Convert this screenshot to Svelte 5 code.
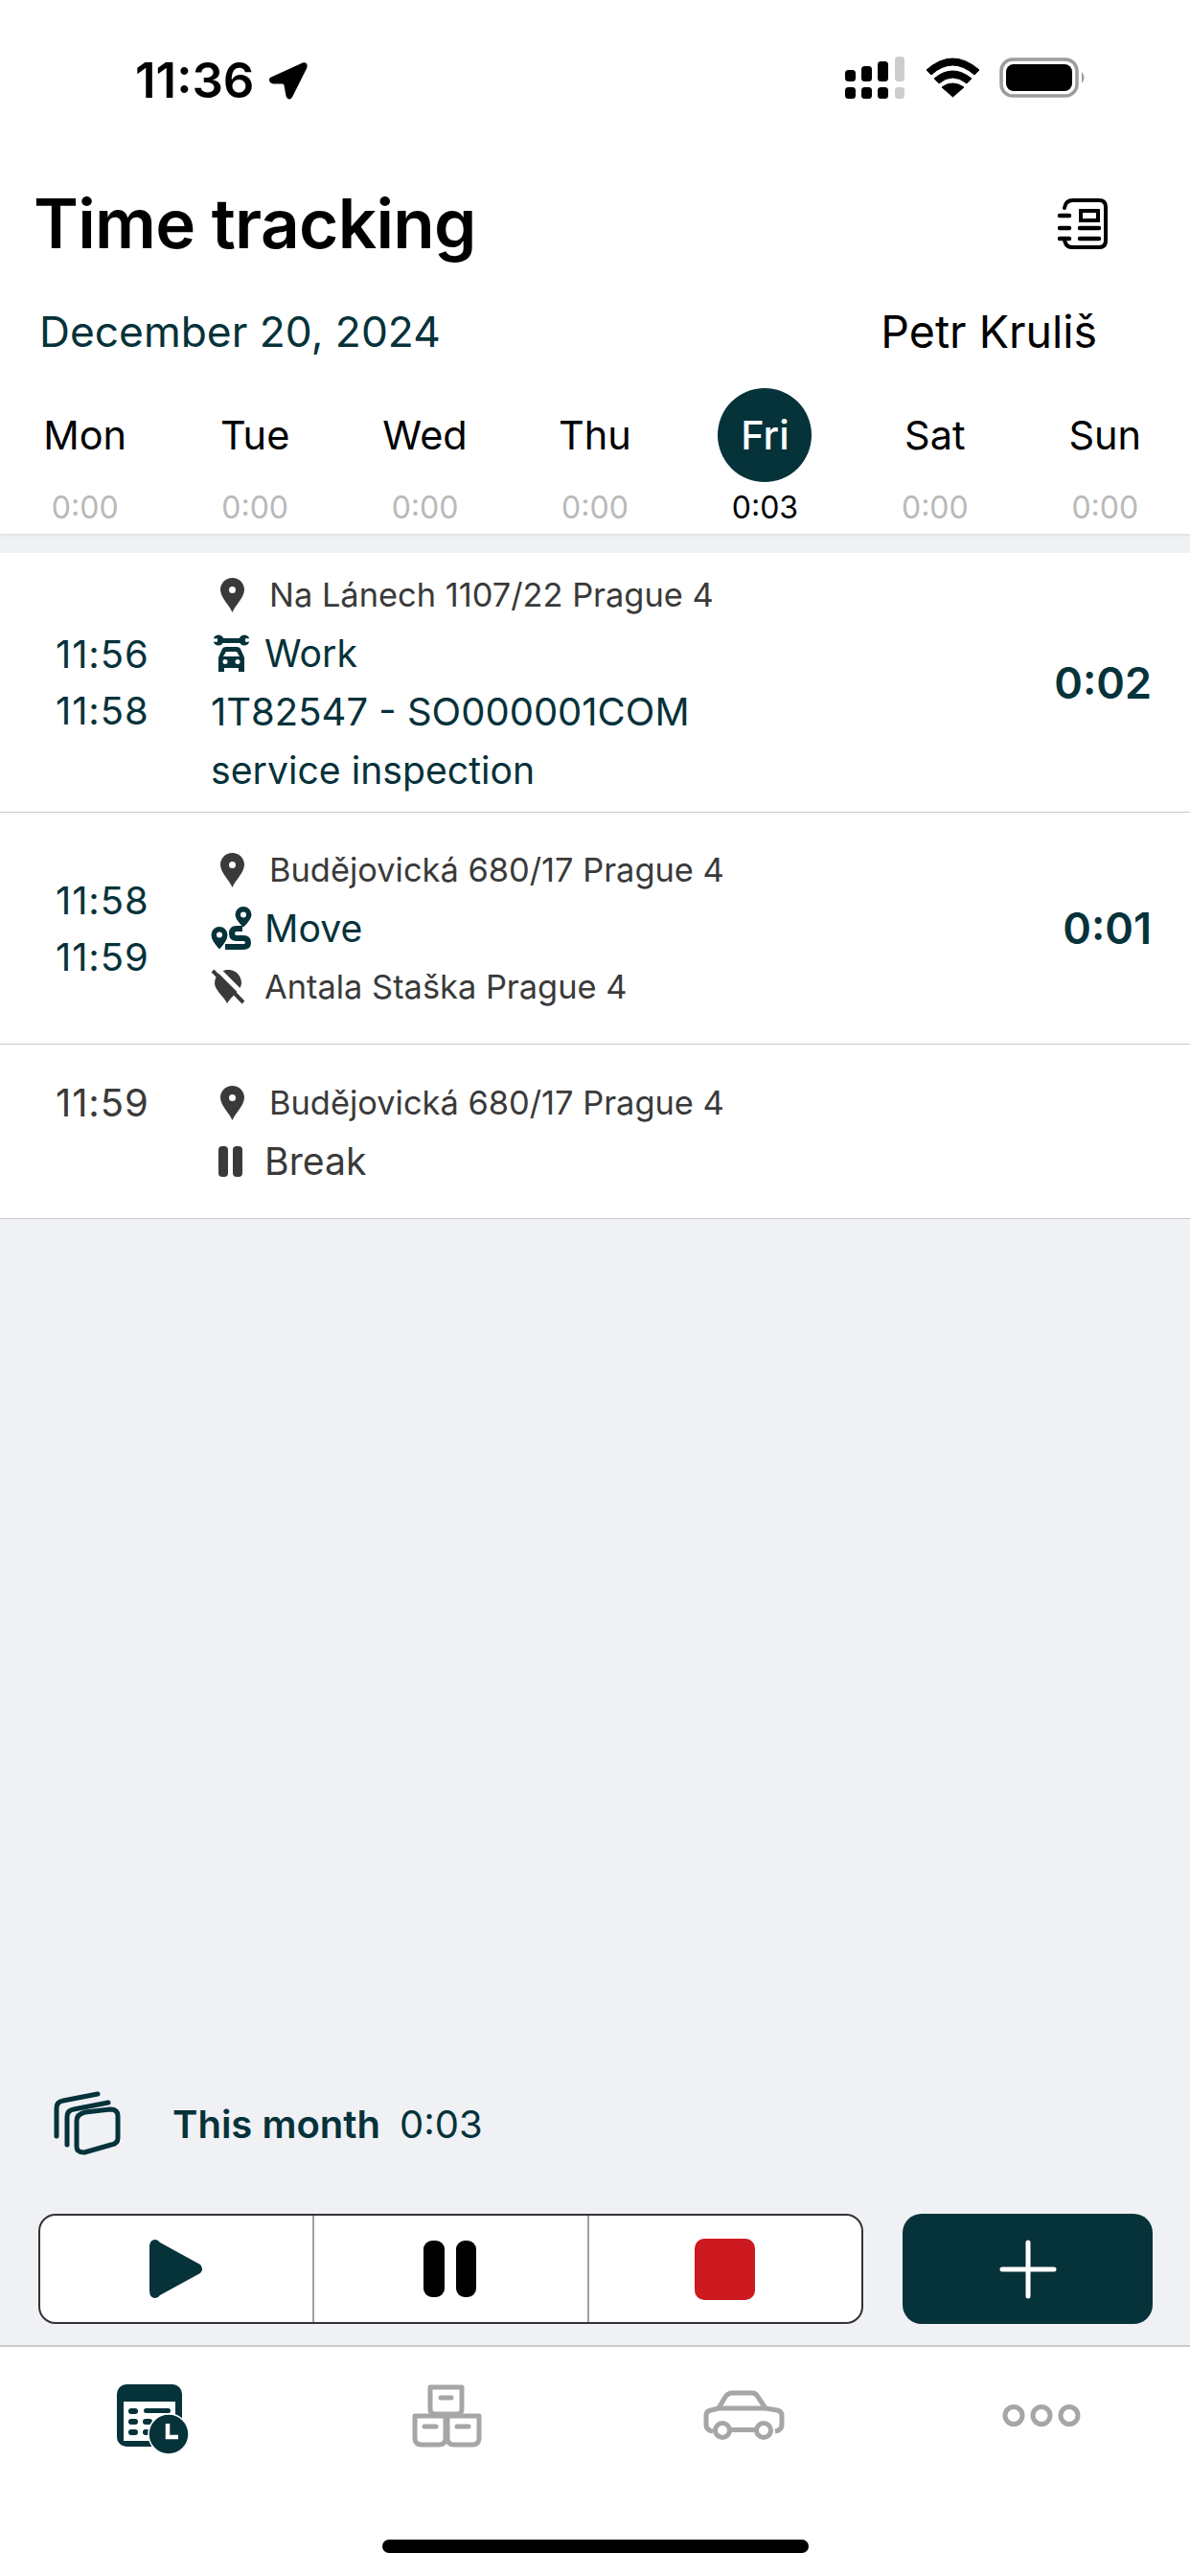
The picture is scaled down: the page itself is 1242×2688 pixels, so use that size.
<script>
  const days = [
    { d: 'Mon', h: '0:00' }, { d: 'Tue', h: '0:00' }, { d: 'Wed', h: '0:00' }, { d: 'Thu', h: '0:00' },
    { d: 'Fri', h: '0:03', on: true }, { d: 'Sat', h: '0:00' }, { d: 'Sun', h: '0:00' }
  ];
  const pin = 'M12.5 0C5.6 0 0 5.5 0 12.3c0 8.2 9.6 16.4 12.5 23.7C15.4 28.7 25 20.500 25 12.300 25 5.500 19.400 0 12.500 0Zm0 9a3.500 3.500 0 1 1 0 7 3.500 3.500 0 0 1 0-7Z';
</script>

<div class="app">
  <header class="head">
    <div class="status">
      <span class="clock">11:36</span>
      <svg class="loc" viewBox="278 60 44 46" width="44" height="46"><path d="M283 82 L316 67 Q320 66 319 70 L304 100 Q302 104 300 100 L298 89 Q297.500 86 295 86 L285 86 Q281 84 283 82Z" fill="#000" stroke="#000" stroke-width="3" stroke-linejoin="round"/></svg>
      <span class="grow"></span>
      <svg viewBox="880 60 255 46" width="255" height="46">
        <g fill="#000">
          <rect x="882" y="75" width="11" height="12" rx="3.500"/><rect x="882" y="93" width="11" height="12" rx="3.500"/>
          <rect x="899" y="71" width="11" height="16" rx="3.500"/><rect x="899" y="93" width="11" height="12" rx="3.500"/>
          <rect x="916" y="66" width="11" height="21" rx="3.500"/><rect x="916" y="93" width="11" height="12" rx="3.500"/>
        </g>
        <g fill="#cdcdcd"><rect x="934" y="61" width="10" height="26" rx="3.500"/><rect x="934" y="93" width="10" height="12" rx="3.500"/></g>
        <path d="M967 75 Q994 51 1022 75 L1017 80 Q994 60 972 80Z M975 84 Q994 68 1014 84 L1009 89 Q994 77 980 89Z M983 93 Q994 85 1006 93 L994.500 103Z" fill="#000" stroke="#000" stroke-width="1" stroke-linejoin="round"/>
        <rect x="1045" y="64" width="79" height="38" rx="12" fill="none" stroke="#9c9c9c" stroke-width="3.500"/>
        <rect x="1050" y="69" width="69" height="28" rx="8" fill="#000"/>
        <path d="M1129 77 Q1134 83 1129 89Z" fill="#9c9c9c"/>
      </svg>
    </div>
    <div class="title-row">
      <h1>Time tracking</h1>
      <svg class="book" viewBox="1100 202 58 64" width="58" height="64" fill="none" stroke="#000" stroke-width="4" stroke-linecap="round">
        <path d="M1111 217 Q1112 209 1120 209 H1147 Q1154 209 1154 216 V251 Q1154 258 1147 258 H1119 Q1112 258 1111 250"/>
        <path d="M1106 225 H1116 M1106 238 H1116 M1106 249 H1116" stroke-width="4.500"/>
        <rect x="1128" y="220" width="18" height="10"/>
        <path d="M1127 238 H1147 M1127 249 H1147" stroke-width="4.500"/>
      </svg>
    </div>
    <div class="date-row">
      <span class="date">December 20, 2024</span>
      <span class="user">Petr Kruliš</span>
    </div>
    <div class="week">
      {#each days as day}
        <div class="day" class:on={day.on}>
          <span class="dname">{day.d}</span>
          <span class="dhours">{day.h}</span>
        </div>
      {/each}
    </div>
  </header>

  <main class="list">
    <section class="row r1">
      <div class="times"><span>11:56</span><span>11:58</span></div>
      <div class="detail">
        <div class="line addr"><svg class="pin" viewBox="0 0 25 36" width="25" height="36"><path d={pin} fill-rule="evenodd" fill="#3a3a3a"/></svg>Na Lánech 1107/22 Prague 4</div>
        <div class="line dark">
          <svg class="kind" viewBox="218 660 44 44" width="44" height="44" fill="#06323a">
            <path d="M227 668.500 H252" stroke="#06323a" stroke-width="5"/>
            <circle cx="226" cy="668" r="5.500"/><circle cx="253" cy="668" r="5.500"/>
            <path d="M219 668 H225 M260 668 H254" stroke="#fff" stroke-width="3.500"/>
            <path d="M226 701 V686 L230 677 Q231 675 234 675 H245 Q248 675 249 677 L253 686 V701 H247 V697 H232 V701Z M231 685 H248 L245 680 H234Z" fill-rule="evenodd"/>
            <circle cx="233" cy="690.500" r="2.500" fill="#fff"/><circle cx="246" cy="690.500" r="2.500" fill="#fff"/>
          </svg>Work</div>
        <div class="line dark code">1T82547 - SO000001COM</div>
        <div class="line dark">service inspection</div>
      </div>
      <div class="dur">0:02</div>
    </section>

    <section class="row r2">
      <div class="times"><span>11:58</span><span>11:59</span></div>
      <div class="detail">
        <div class="line addr"><svg class="pin" viewBox="0 0 25 36" width="25" height="36"><path d={pin} fill-rule="evenodd" fill="#3a3a3a"/></svg>Budějovická 680/17 Prague 4</div>
        <div class="line dark">
          <svg class="kind" viewBox="218 945 44 50" width="44" height="50">
            <path d="M252 947 a8.500 8.500 0 0 0-8.500 8.500 q0 5 8.500 13 q8.500-8 8.500-13 a8.500 8.500 0 0 0-8.500-8.500Zm0 5.500a3 3 0 1 1 0 6 3 3 0 0 1 0-6Z" fill="#06323a" fill-rule="evenodd"/>
            <path d="M227 968 a8.500 8.500 0 0 0-8.500 8.500 q0 6 8.500 15 q8.500-9 8.500-15 a8.500 8.500 0 0 0-8.500-8.500Zm0 5.500a3 3 0 1 1 0 6 3 3 0 0 1 0-6Z" fill="#06323a" fill-rule="evenodd"/>
            <path d="M251 970 H245 Q240 970 240 975 Q240 980 245 980 H252 Q257 980 257 984.500 Q257 989 252 989 H233" fill="none" stroke="#06323a" stroke-width="6"/>
          </svg>Move</div>
        <div class="line sub">
          <svg class="kind" viewBox="218 1010 44 40" width="44" height="40">
            <path d="M236 1012 C245 1012 250 1019 250 1026 C250 1033 240 1039 235 1047 C231 1039 222 1033 222 1026 C222 1019 228 1012 236 1012Z" fill="#3a3a3a"/>
            <path d="M223 1009 L255 1041" stroke="#fff" stroke-width="5"/>
            <path d="M220 1013 L252 1046" stroke="#3a3a3a" stroke-width="4"/>
          </svg>Antala Staška Prague 4</div>
      </div>
      <div class="dur">0:01</div>
    </section>

    <section class="row r3">
      <div class="times grey top"><span>11:59</span></div>
      <div class="detail">
        <div class="line addr"><svg class="pin" viewBox="0 0 25 36" width="25" height="36"><path d={pin} fill-rule="evenodd" fill="#3a3a3a"/></svg>Budějovická 680/17 Prague 4</div>
        <div class="line grey">
          <svg class="kind" viewBox="218 1190 44 44" width="44" height="44" fill="#3a3a3a"><rect x="226" y="1196" width="10" height="32" rx="4"/><rect x="241" y="1196" width="10" height="32" rx="4"/></svg>Break</div>
      </div>
    </section>
  </main>

  <div class="summary">
    <svg viewBox="52 2178 78 74" width="78" height="74" fill="none" stroke="#06323a" stroke-width="5" stroke-linecap="round" stroke-linejoin="round">
      <path d="M59 2229 V2200 Q59 2193 66 2192 L102 2185"/>
      <path d="M70 2238 V2209 Q70 2202 77 2201 L113 2194"/>
      <path d="M89 2204 L115 2201 Q123 2201 123 2208 V2231 Q123 2237 116 2238 L88 2246 Q80 2246 80 2240 V2213 Q80 2206 89 2204Z"/>
    </svg>
    <span class="mlabel">This month</span>
    <span class="mvalue">0:03</span>
  </div>

  <div class="actions">
    <div class="segment">
      <button aria-label="Start">
        <svg viewBox="150 2330 70 76" width="70" height="76"><path d="M157 2345 Q157 2337 163 2337 Q166 2337 168 2340 L210 2363 Q214 2367.500 210 2372 L168 2395 Q166 2398 163 2398 Q157 2398 157 2390Z" fill="#06323a"/></svg>
      </button>
      <button aria-label="Pause">
        <svg viewBox="435 2335 70 66" width="70" height="66" fill="#000"><rect x="442" y="2338" width="22" height="59" rx="9"/><rect x="476" y="2338" width="21" height="59" rx="9"/></svg>
      </button>
      <button aria-label="Stop">
        <span class="stop"></span>
      </button>
    </div>
    <button class="add" aria-label="Add">
      <svg viewBox="1040 2336 64 64" width="64" height="64" stroke="#fff" stroke-width="5" stroke-linecap="round"><path d="M1045 2368 H1099 M1072 2340 V2396"/></svg>
    </button>
  </div>

  <footer class="tabs">
    <div class="tabrow">
      <svg viewBox="110 2480 90 90" width="90" height="90">
        <rect x="122" y="2488" width="68" height="65" rx="10" fill="#06323a"/>
        <rect x="129" y="2506" width="54" height="41" fill="#fff"/>
        <g fill="#06323a">
          <rect x="134" y="2513" width="10" height="6" rx="3"/><rect x="134" y="2524" width="10" height="6" rx="3"/><rect x="134" y="2535" width="10" height="6" rx="3"/>
          <rect x="150" y="2513" width="28" height="5" rx="2.500"/><rect x="149" y="2524" width="10" height="6" rx="3"/><rect x="149" y="2535" width="8" height="6" rx="3"/>
        </g>
        <circle cx="176" cy="2540" r="21" fill="#06323a" stroke="#fff" stroke-width="1.500"/>
        <path d="M175 2529 V2543 H186" fill="none" stroke="#fff" stroke-width="4.500"/>
      </svg>
      <svg viewBox="421 2480 90 90" width="90" height="90" fill="none" stroke="#a6a6a6" stroke-width="5" stroke-linejoin="round">
        <path d="M449 2491 H482 V2514 Q482 2519 477 2519 H454 Q449 2519 449 2514Z"/>
        <path d="M433 2521 H465 V2544 Q465 2551 458 2551 H440 Q433 2551 433 2544Z"/>
        <path d="M467 2521 H500 V2544 Q500 2551 493 2551 H474 Q467 2551 467 2544Z"/>
        <path d="M460 2502 H471 M443 2532 H455 M477 2532 H489" stroke-linecap="round" stroke-width="5"/>
      </svg>
      <svg viewBox="731 2480 90 90" width="90" height="90" fill="none" stroke="#a6a6a6" stroke-width="5" stroke-linejoin="round">
        <path d="M750 2513 L757 2501 Q760 2497 764 2497 H785 Q789 2497 791 2501 L799 2513"/>
        <path d="M744 2537 Q737 2536 737 2530 V2520 Q737 2516 742 2515 L750 2513 H799 L811 2515 Q816 2516 816 2521 V2530 Q816 2536 809 2537"/>
        <path d="M763 2535.500 H788"/>
        <circle cx="754" cy="2536" r="7.500"/><circle cx="797" cy="2536" r="7.500"/>
      </svg>
      <svg viewBox="1042 2480 90 90" width="90" height="90" fill="none" stroke="#a6a6a6" stroke-width="5"><circle cx="1058" cy="2520.500" r="9"/><circle cx="1087" cy="2520.500" r="9"/><circle cx="1116" cy="2520.500" r="9"/></svg>
    </div>
    <div class="homebar"></div>
  </footer>
</div>

<style>
  :global(body) { margin: 0; }
  .app {
    width: 1242px; height: 2688px; display: flex; flex-direction: column;
    background: #eff1f5; font-family: Inter, "Liberation Sans", sans-serif; color: #000; overflow: hidden;
  }
  svg { display: block; flex: none; }
  .head { background: #fff; height: 557px; box-shadow: 0 2px 2px #e0e1e4; position: relative; }
  .status { height: 140px; display: flex; align-items: flex-start; padding: 58px 107px 0 141px; box-sizing: border-box; }
  .clock { width: 137px; font-size: 51px; font-weight: 600; line-height: 52px; white-space: nowrap; }
  .loc { margin-top: 2px; }
  .grow { flex: 1; }
  .title-row { height: 178px; box-sizing: border-box; padding: 55px 84px 0 35px; display: flex; justify-content: space-between; align-items: flex-start; }
  h1 { margin: 0; font-size: 71px; font-weight: 600; line-height: 76px; letter-spacing: -0.7px; }
  .book { margin-top: 7px; }
  .date-row { display: flex; justify-content: space-between; padding: 0 97px 0 41px; height: 56px; line-height: 56px; }
  .date { font-size: 44.3px; color: #06323a; }
  .user { font-size: 46.5px; }
  .week { display: grid; grid-template-columns: repeat(7, 1fr); margin-top: 31px; }
  .day { display: flex; flex-direction: column; align-items: center; }
  .dname { width: 98px; height: 98px; border-radius: 50%; line-height: 98px; text-align: center; font-size: 41.5px; }
  .dhours { margin-top: 7px; font-size: 32px; line-height: 40px; color: #b9b9b9; }
  .on .dname { background: #06323a; color: #fff; font-weight: 500; }
  .on .dhours { color: #000; }
  .list { flex: 1; padding-top: 20px; }
  .row { display: flex; align-items: center; background: #fff; border-bottom: 1.5px solid #c9c9c9; box-sizing: border-box; }
  .r1 { height: 271px; }
  .r2 { height: 242px; }
  .r3 { height: 182px; align-items: flex-start; padding-top: 30px; }
  .times { width: 220px; padding-left: 58px; box-sizing: border-box; display: flex; flex-direction: column; font-size: 40px; letter-spacing: 0.9px; line-height: 59px; color: #06323a; }
  .times.top { line-height: 61px; }
  .detail { flex: 1; }
  .line { display: flex; align-items: center; height: 61px; font-size: 39.2px; white-space: nowrap; }
  .line.code { font-size: 40px; }
  .dark { color: #06323a; }
  .grey, .times.grey { color: #3a3a3a; }
  .addr { font-size: 34.4px; color: #3a3a3a; padding-left: 10px; }
  .pin { margin-right: 26px; }
  .sub { font-size: 34.4px; color: #3a3a3a; }
  .kind { margin-right: 12px; }
  .dur { font-size: 45px; font-weight: 600; color: #06323a; padding-right: 40px; }
  .summary { display: flex; align-items: center; padding-left: 52px; height: 74px; color: #06323a; font-size: 40px; margin-bottom: 58px; }
  .mlabel { font-weight: 600; margin: 3px 0 0 50px; }
  .mvalue { margin: 3px 0 0 20px; }
  .actions { display: flex; justify-content: space-between; padding: 0 39px 0 40px; height: 115px; margin-bottom: 22px; }
  .segment { width: 861px; display: flex; box-sizing: border-box; background: #fff; border: 2px solid #333; border-radius: 18px; overflow: hidden; }
  .segment button { flex: 1; background: none; border: 0; padding: 0; display: flex; align-items: center; justify-content: center; border-left: 2px solid #a0a0a0; }
  .segment button:first-child { border-left: 0; }
  .stop { width: 63px; height: 64px; border-radius: 10px; background: #cc1a20; }
  .add { width: 261px; background: #06323a; border: 0; border-radius: 20px; padding: 0; display: flex; align-items: center; justify-content: center; }
  .tabs { background: #fff; height: 241px; border-top: 2px solid #c9c9c9; box-sizing: border-box; padding-top: 31px; }
  .tabrow { display: grid; grid-template-columns: repeat(4, 1fr); justify-items: center; }
  .homebar { width: 445px; height: 14px; border-radius: 7px; background: #000; margin: 80px auto 0; }
</style>
